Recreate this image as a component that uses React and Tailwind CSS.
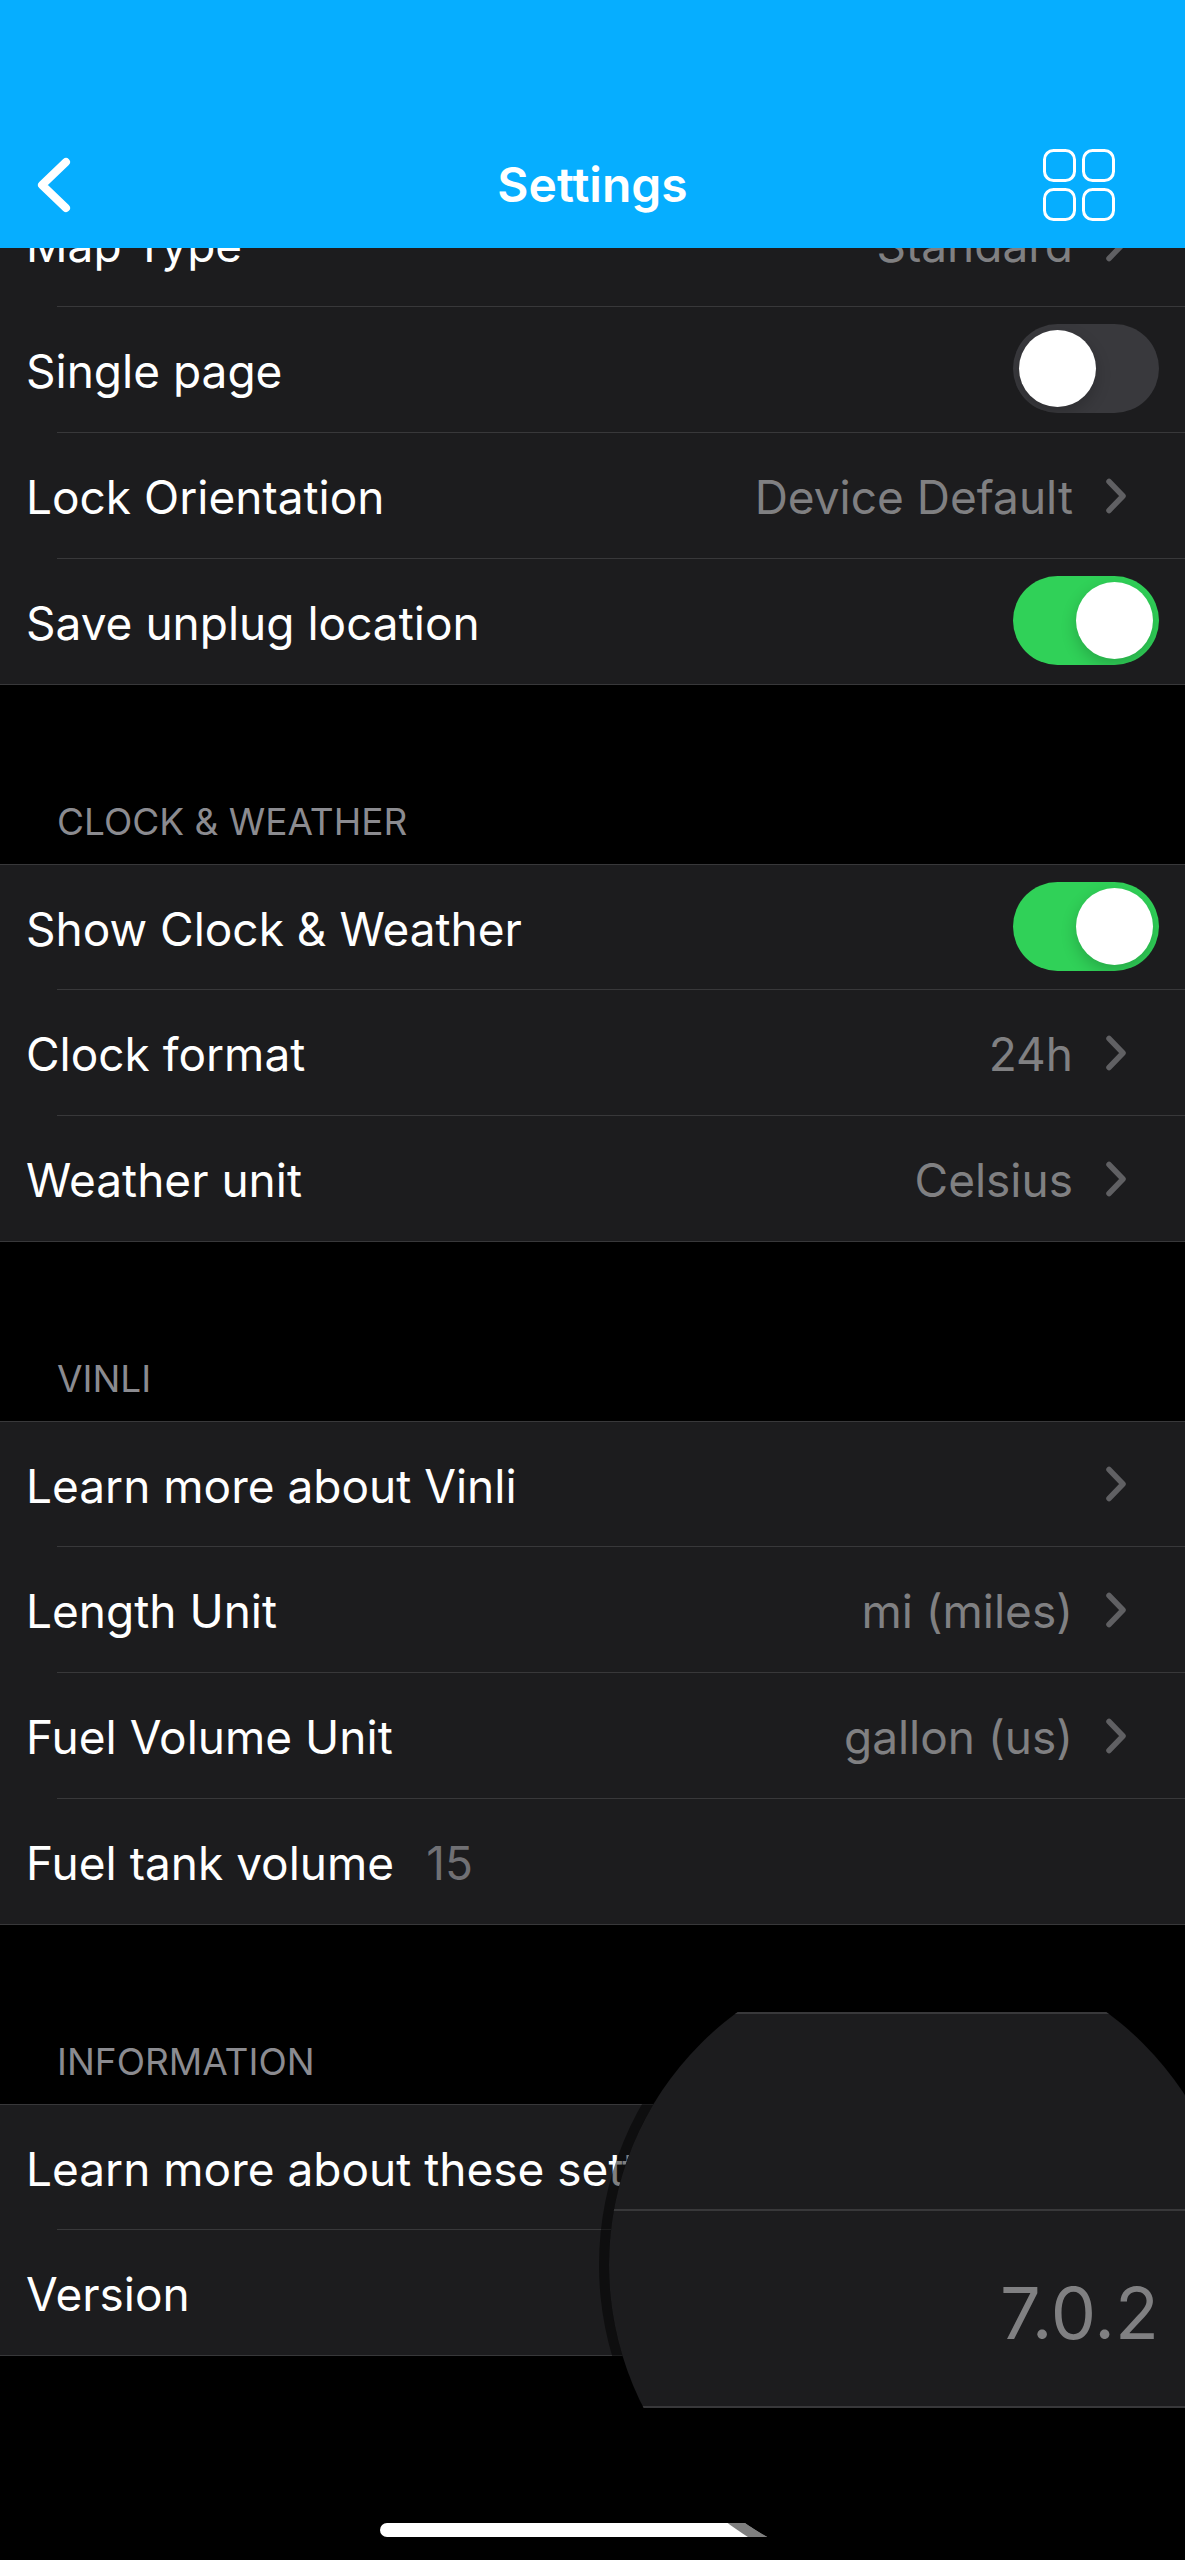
import { useState } from "react";

function Chevron() {
  return (
    <svg viewBox="0 0 22 36" fill="none" className="h-9 w-[22px] shrink-0" aria-hidden="true">
      <path d="M4 3.5 L18 18 L4 32.5" stroke="#606063" strokeWidth="5.5" strokeLinecap="round" strokeLinejoin="round" />
    </svg>
  );
}

function Row({ children, first, last }) {
  return (
    <li className={`flex min-h-[126px] flex-col ${first ? "border-t border-[#38383a]" : ""}`}>
      {children}
      <div className={last ? "h-px bg-[#38383a]" : "ml-[57px] h-px bg-[#38383a]"} />
    </li>
  );
}

function LinkRow({ label, value, first, last }) {
  return (
    <Row first={first} last={last}>
      <button type="button" className="flex flex-1 items-center gap-8 pr-[58px] pl-[26px] text-left">
        <span className="flex-1 pt-[3px]">{label}</span>
        {value && <span className="pt-[3px] text-[#808082]">{value}</span>}
        <Chevron />
      </button>
    </Row>
  );
}

function SwitchRow({ label, on, first, last }) {
  const [checked, setChecked] = useState(on);
  return (
    <Row first={first} last={last}>
      <label className="flex flex-1 items-center gap-8 pr-[26px] pb-0.5 pl-[26px]">
        <span className="flex-1 pt-[5px]">{label}</span>
        <input
          type="checkbox"
          role="switch"
          checked={checked}
          onChange={(e) => setChecked(e.target.checked)}
          className="flex h-[89px] w-[146px] shrink-0 appearance-none items-center overflow-hidden rounded-full bg-[#39393d] px-1.5 before:size-[77px] before:rounded-full before:bg-white before:shadow-[0_6px_16px_rgba(0,0,0,0.2)] checked:justify-end checked:bg-[#30d158]"
        />
      </label>
    </Row>
  );
}

function Section({ title, children }) {
  return (
    <section>
      <h2 className="flex h-[179px] items-end px-[57px] pb-[19px] text-[37px] leading-[46px] text-[#8b8b90]">{title}</h2>
      <ul className="bg-[#1c1c1e]">{children}</ul>
    </section>
  );
}

function VersionLens() {
  return (
    <div className="absolute -right-[60px] -bottom-[28px] size-[646px] overflow-hidden rounded-full border-10 border-black/50 bg-black bg-clip-padding pt-[60px]">
      <div className="border-y-2 border-[#38383a] bg-[#1c1c1e]">
        <div className="h-[195px]" />
        <div className="flex h-[197px] items-center justify-end border-t-2 border-[#38383a] pt-2 pr-[76px] text-[72px] leading-none text-[#808082]">
          7.0.2
        </div>
      </div>
    </div>
  );
}

export default function App() {
  return (
    <div className="relative min-h-screen overflow-hidden bg-black font-[Inter,sans-serif] text-[46px] leading-[60px] text-white">
      <header className="relative z-10 grid grid-cols-[1fr_auto_1fr] items-center bg-[#06aeff] px-9 pt-[122px]">
        <button type="button" aria-label="Back" className="h-[126px] w-20">
          <svg viewBox="0 0 36 56" fill="none" className="h-14 w-9" aria-hidden="true">
            <path d="M30 5 L6 28 L30 51" stroke="#fff" strokeWidth="8" strokeLinecap="round" strokeLinejoin="round" />
          </svg>
        </button>
        <h1 className="text-[48px] font-semibold">Settings</h1>
        <button type="button" aria-label="Dashboard" className="mr-[34px] justify-self-end">
          <svg viewBox="0 0 72 72" fill="none" stroke="#fff" strokeWidth="3" className="size-[72px]" aria-hidden="true">
            <rect x="1.5" y="1.5" width="30" height="30" rx="9" />
            <rect x="40.5" y="1.5" width="30" height="30" rx="9" />
            <rect x="1.5" y="40.5" width="30" height="30" rx="9" />
            <rect x="40.5" y="40.5" width="30" height="30" rx="9" />
          </svg>
        </button>
      </header>

      <main>
        <ul className="-mt-[67px] bg-[#1c1c1e]">
          <LinkRow label="Map Type" value="Standard" />
          <SwitchRow label="Single page" on={false} />
          <LinkRow label="Lock Orientation" value="Device Default" />
          <SwitchRow label="Save unplug location" on last />
        </ul>

        <Section title="CLOCK & WEATHER">
          <SwitchRow label="Show Clock & Weather" on first />
          <LinkRow label="Clock format" value="24h" />
          <LinkRow label="Weather unit" value="Celsius" last />
        </Section>

        <Section title="VINLI">
          <LinkRow label="Learn more about Vinli" first />
          <LinkRow label="Length Unit" value="mi (miles)" />
          <LinkRow label="Fuel Volume Unit" value="gallon (us)" />
          <Row last>
            <div className="flex flex-1 items-center gap-8 pt-[3px] pr-[26px] pl-[26px]">
              <label htmlFor="tank">Fuel tank volume</label>
              <input id="tank" inputMode="numeric" defaultValue="15" className="min-w-0 flex-1 bg-transparent text-[#707074] outline-none" />
            </div>
          </Row>
        </Section>

        <Section title="INFORMATION">
          <LinkRow label="Learn more about these settings" first />
          <Row last>
            <div className="flex flex-1 items-center pt-[3px] pl-[26px]">Version</div>
          </Row>
        </Section>
      </main>

      <div className="mx-auto mt-[167px] mb-[23px] h-3.5 w-[425px] rounded-full bg-white" />
      <VersionLens />
    </div>
  );
}
